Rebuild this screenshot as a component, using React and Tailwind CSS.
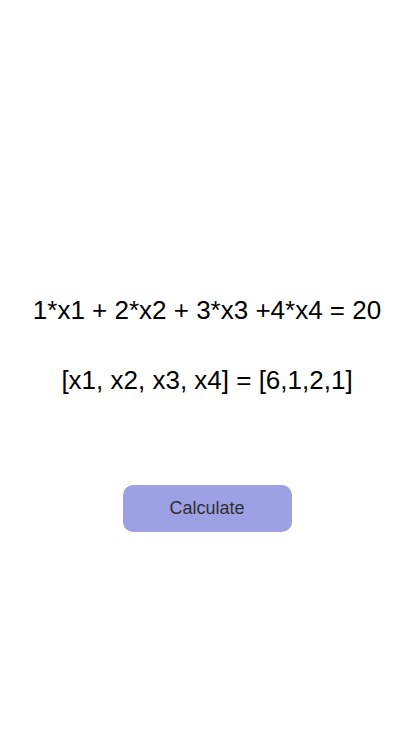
export default function App() {
  return (
    <div className="min-h-[736px] w-full bg-white flex flex-col items-center pt-[295px] font-['Liberation_Sans',Arial,sans-serif] text-black">
      <p className="text-[26px] leading-[30px]">1*x1 + 2*x2 + 3*x3 +4*x4 = 20</p>
      <p className="text-[26px] leading-[30px] mt-[40px]">[x1, x2, x3, x4] = [6,1,2,1]</p>
      <button className="mt-[90px] w-[169px] h-[47px] rounded-[10px] bg-[#9ea0e4] text-[18px] text-[#2e2e36]">
        Calculate
      </button>
    </div>
  );
}
